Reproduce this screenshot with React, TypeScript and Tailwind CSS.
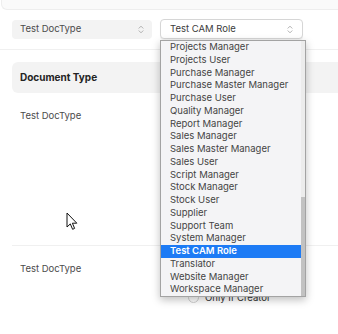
import React from "react";

const roles = [
  "Projects Manager",
  "Projects User",
  "Purchase Manager",
  "Purchase Master Manager",
  "Purchase User",
  "Quality Manager",
  "Report Manager",
  "Sales Manager",
  "Sales Master Manager",
  "Sales User",
  "Script Manager",
  "Stock Manager",
  "Stock User",
  "Supplier",
  "Support Team",
  "System Manager",
  "Test CAM Role",
  "Translator",
  "Website Manager",
  "Workspace Manager",
];

const UpDown = () => (
  <svg width="6" height="9" viewBox="0 0 6 9" fill="none" className="text-[#a8a8a8]">
    <path d="M1 3.2 3 1.2 5 3.2M1 5.8 3 7.8 5 5.8" stroke="currentColor" strokeWidth="0.9" strokeLinecap="round" strokeLinejoin="round" />
  </svg>
);

const Cursor = () => (
  <svg width="12" height="19" viewBox="0 0 12 19" className="absolute left-[66px] top-[212px]">
    <path d="M1 1 L1 15 L4.3 11.9 L6.6 17.3 L8.6 16.4 L6.4 11.2 L10.8 11.2 Z" fill="#fff" stroke="#111" strokeWidth="1" strokeLinejoin="round" />
  </svg>
);

export default function App() {
  return (
    <div className="relative w-[338px] h-[334px] overflow-hidden bg-white font-['Inter',sans-serif] text-[#4b4b4b]">
      {/* strip from the card above */}
      <div className="h-[10px] bg-[#fafafa] border-b border-l border-[#eeeeee] rounded-bl-md ml-[1px]" />

      {/* filters */}
      <div className="flex gap-2 pl-3 pt-[10px] h-[40px] border-b border-[#f0f0f0]">
        <div className="w-[140px] h-[19px] rounded-[4px] bg-[#f3f3f3] flex items-center justify-between pl-2 pr-[8px] text-[9.5px]">
          <span>Test DocType</span>
          <UpDown />
        </div>
        <div className="w-[143px] h-[20px] -mt-[1px] rounded-[4px] bg-white border border-[#d6d6d6] shadow-[0_1px_1px_rgba(0,0,0,0.06)] flex items-center justify-between pl-[9px] pr-[9px] text-[9.5px] text-[#3c3c3c]">
          <span>Test CAM Role</span>
          <UpDown />
        </div>
      </div>

      {/* table */}
      <div className="pl-3 pt-3">
        <div className="h-[31px] rounded-l-[6px] bg-[#f3f3f3] flex items-center pl-2 text-[10px] font-bold text-[#232323]">
          Document Type
        </div>
        <div className="h-[153px] border-b border-[#f0f0f0] pl-2 pt-[16px] text-[9.5px]">
          Test DocType
        </div>
        <div className="flex h-[60px] text-[9.5px]">
          <div className="w-[148px] pl-2 pt-[16px]">Test DocType</div>
          <div className="pt-[45px] pl-[28px] flex items-start gap-[6px]">
            <span className="mt-[1px] w-[11px] h-[11px] rounded-full border border-[#cfcfcf] bg-white" />
            <span className="text-[#333]">Only If Creator</span>
          </div>
        </div>
      </div>

      {/* native select dropdown */}
      <div className="absolute left-[160px] top-[40px] w-[146px] h-[257px] bg-[#f4f4f6] border border-[#a3a3a3] shadow-[0_3px_8px_rgba(0,0,0,0.25)] flex">
        <div className="flex-1 flex flex-col text-[9.5px] text-[#444444]">
          {roles.map((r) =>
            r === "Test CAM Role" ? (
              <div key={r} className="h-[12.75px] leading-[12.75px] pl-[9px] bg-[#1d7bf5] text-white font-semibold">
                {r}
              </div>
            ) : (
              <div key={r} className="h-[12.75px] leading-[12.75px] pl-[9px]">
                {r}
              </div>
            )
          )}
        </div>
        <div className="w-[4px] bg-[#ececec] flex flex-col pt-[156px]">
          <div className="flex-1 bg-[#c2c2c2]" />
        </div>
      </div>

      <Cursor />
    </div>
  );
}
